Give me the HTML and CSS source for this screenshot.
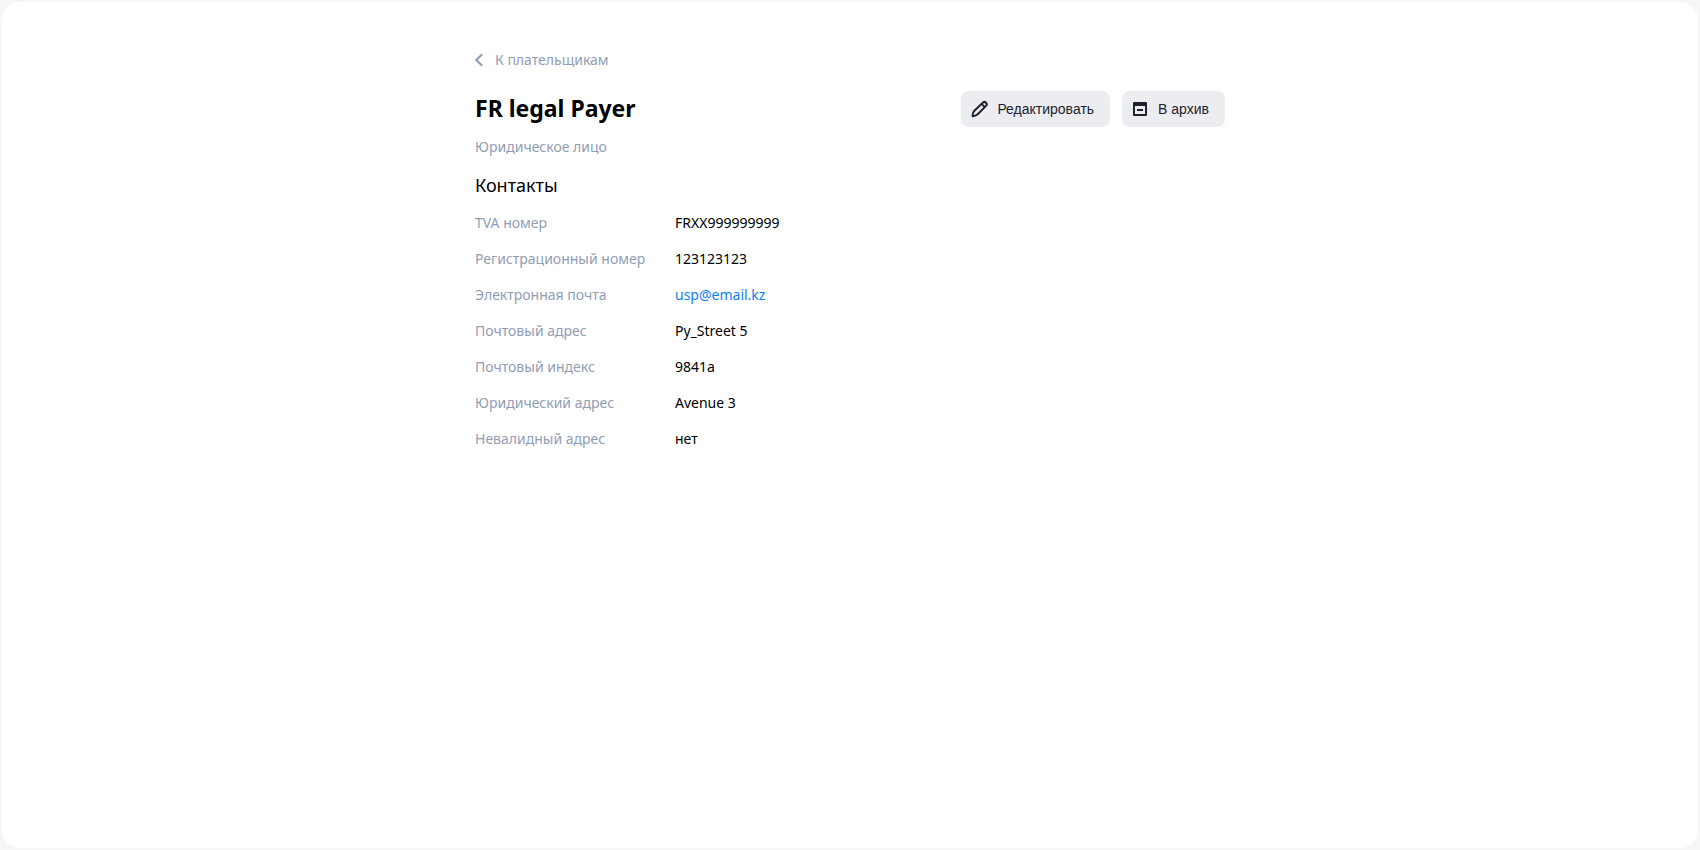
FILE: index.html
```
<!DOCTYPE html>
<html lang="ru">
<head>
<meta charset="utf-8">
<title>FR legal Payer</title>
<link rel="stylesheet" href="styles.css">
</head>
<body>
<main class="panel">
  <div class="content">
    <a class="back" href="#">
      <svg class="back-icon" width="8" height="14" viewBox="0 0 8 14" aria-hidden="true"><path d="M7.2 1.2 1.4 7l5.8 5.8" fill="none" stroke="currentColor" stroke-width="2.2"/></svg>
      К плательщикам
    </a>
    <header class="header">
      <h1 class="title">FR legal Payer</h1>
      <div class="actions">
        <button class="button" type="button">
          <svg width="20" height="20" viewBox="0 0 20 20" fill="none" stroke="currentColor" stroke-width="2" stroke-linejoin="round" aria-hidden="true"><path d="M3.6 17.2q-.2-3.4 1.8-5.4l8.4-8.1a2 2 0 0 1 3.2 3.2l-8.3 8.4q-1.8 1.8-5.1 1.9z"/><path d="M12.6 4.8l3.2 3.2" stroke-width="1.8"/></svg>
          Редактировать
        </button>
        <button class="button" type="button">
          <svg width="20" height="20" viewBox="0 0 20 20" aria-hidden="true"><path fill="currentColor" fill-rule="evenodd" d="M4 3h12a1 1 0 0 1 1 1v12a1 1 0 0 1-1 1H4a1 1 0 0 1-1-1V4a1 1 0 0 1 1-1zM5 7v8h10V7zM7 10h6v2H7z"/></svg>
          В архив
        </button>
      </div>
    </header>
    <p class="kind">Юридическое лицо</p>
    <h2 class="subtitle">Контакты</h2>
    <dl class="details">
      <dt>TVA номер</dt><dd>FRXX999999999</dd>
      <dt>Регистрационный номер</dt><dd>123123123</dd>
      <dt>Электронная почта</dt><dd><a class="mail" href="mailto:usp@email.kz">usp@email.kz</a></dd>
      <dt>Почтовый адрес</dt><dd>Py_Street 5</dd>
      <dt>Почтовый индекс</dt><dd>9841a</dd>
      <dt>Юридический адрес</dt><dd>Avenue 3</dd>
      <dt>Невалидный адрес</dt><dd>нет</dd>
    </dl>
  </div>
</main>
</body>
</html>
```
FILE: styles.css
```
* {
  box-sizing: border-box;
}

body {
  margin: 0;
  min-height: 100vh;
  padding: 2px;
  display: flex;
  background: #f5f6f7;
  color: #000;
  font-family: "Noto Sans", sans-serif;
  font-size: 14px;
  line-height: 20px;
}

.panel {
  flex: 1;
  padding: 48px 24px;
  border-radius: 18px;
  background: #fff;
}

.content {
  max-width: 750px;
  margin: 0 auto;
}

.back {
  display: flex;
  align-items: center;
  gap: 12px;
  width: fit-content;
  color: #929db5;
  text-decoration: none;
}

.header {
  display: flex;
  align-items: flex-start;
  justify-content: space-between;
  margin-top: 21px;
}

.title {
  margin: 0;
  font-size: 23px;
  line-height: 34px;
  font-weight: 700;
}

.actions {
  display: flex;
  gap: 12px;
}

.button {
  display: flex;
  align-items: center;
  gap: 8px;
  height: 36px;
  padding: 0 16px 0 8px;
  border: 0;
  border-radius: 8px;
  background: #ecedf1;
  color: #1f2130;
  font: 14px/20px "Liberation Sans", Arial, sans-serif;
}

.kind {
  margin: 10px 0 0;
  color: #929db5;
}

.subtitle {
  margin: 16px 0 0;
  font-size: 18px;
  line-height: 24px;
  font-weight: 400;
}

.details {
  display: grid;
  grid-template-columns: 200px 1fr;
  row-gap: 16px;
  margin: 16px 0 0;
}

.details dt {
  color: #929db5;
}

.details dd {
  margin: 0;
}

.mail {
  color: #0d80f9;
  text-decoration: none;
}
```
